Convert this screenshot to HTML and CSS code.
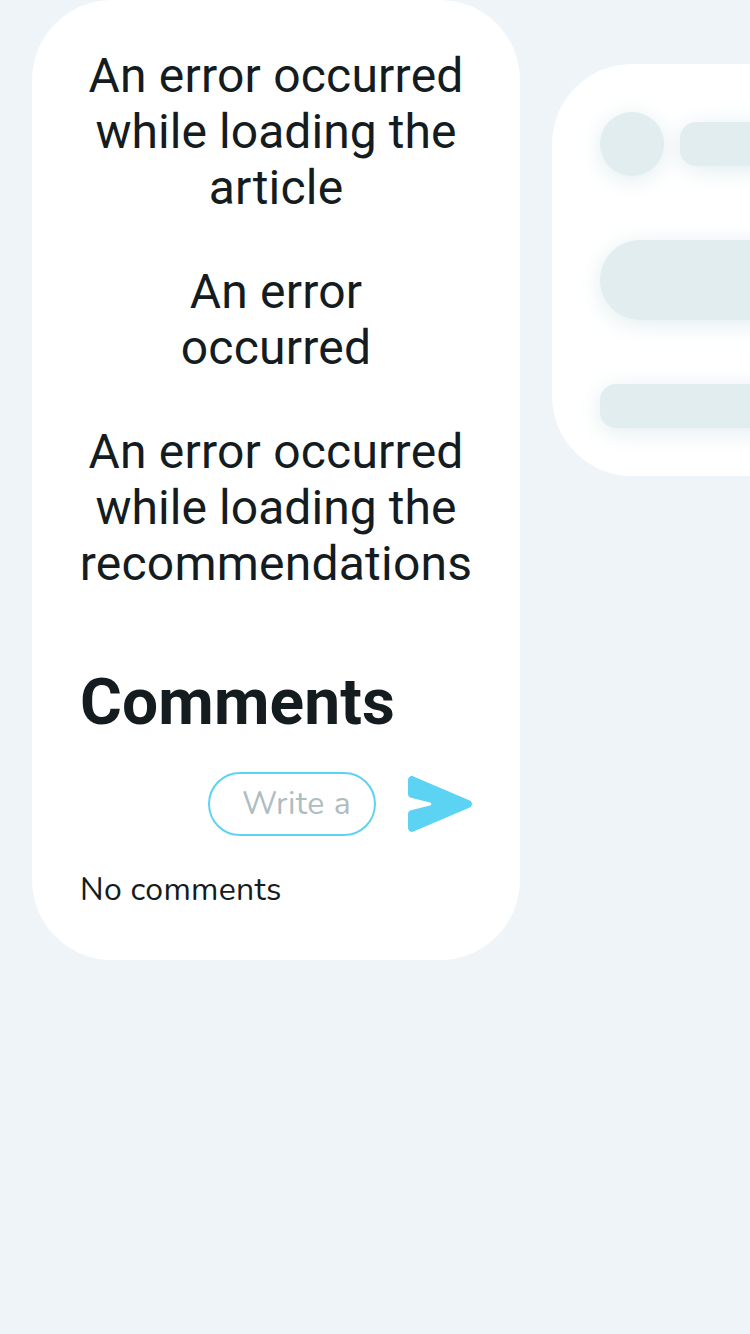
FILE: index.html
```html
<!DOCTYPE html>
<html lang="en">
<head>
<meta charset="utf-8">
<title>Article</title>
<link rel="stylesheet" href="styles.css">
</head>
<body>
<div class="page">
  <main class="card article">
    <p class="error">An error occurred <span class="snug">while loading the</span> article</p>
    <p class="error">An error<br>occurred</p>
    <p class="error">An error occurred <span class="snug">while loading the</span> recommendations</p>
    <h1 class="title">Comments</h1>
    <form class="form">
      <div class="field"><span class="placeholder">Write a</span></div>
      <svg class="send" viewBox="0 0 64 56" aria-hidden="true"><path d="M0 4.2C0 1.2 2.8-.8 5.5.4L61.8 24.5c2.9 1.3 2.9 5.7 0 7L5.5 55.6C2.8 56.8 0 54.8 0 51.8V38c0-1.8 1.2-3.3 2.9-3.8L22 29.6c1.7-.5 1.7-2.7 0-3.2L2.9 21.8C1.2 21.3 0 19.8 0 18Z"/></svg>
    </form>
    <p class="empty">No comments</p>
  </main>
  <aside class="card side">
    <div class="row"><div class="bone avatar"></div><div class="bone name"></div></div>
    <div class="bone heading"></div>
    <div class="bone line"></div>
  </aside>
</div>
</body>
</html>
```
FILE: styles.css
```css
body { margin: 0; background: #eef4f7; color: #141c1f; font-family: Roboto, sans-serif; }
.page { display: flex; align-items: flex-start; gap: 32px; width: 100%; height: 1334px; padding-left: 32px; box-sizing: border-box; overflow: hidden; }
.card { box-sizing: border-box; flex: none; width: 488px; padding: 48px; border-radius: 80px; background: #fff; }
.article { height: 960px; }
.error { margin: 0 -4px 48px; font-size: 48px; line-height: 56px; text-align: center; letter-spacing: 0.22px; }
.snug { letter-spacing: 0.06px; }
.title { margin: 73px 0 31px; font-size: 64px; line-height: 76px; font-weight: 700; letter-spacing: 0.15px; }
.form { display: flex; justify-content: flex-end; align-items: center; gap: 32px; margin: 0; }
.field { box-sizing: border-box; width: 168px; height: 64px; padding: 0 20px 0 32px; border: 2px solid #5dd3f3; border-radius: 32px; overflow: hidden; }
.placeholder { display: block; font: 32px/60px Nunito, "Open Sans", sans-serif; letter-spacing: 0.5px; color: #aebdc1; white-space: nowrap; }
.send { width: 64px; height: 56px; fill: #5dd3f3; }
.empty { margin: 32px 0 0; font: 32px/44px Nunito, "Open Sans", sans-serif; letter-spacing: 0.28px; }
.side { margin-top: 64px; height: 412px; }
.bone { background: #e2edef; box-shadow: 0 4px 24px #e2edf0; }
.row { display: flex; gap: 16px; align-items: center; }
.avatar { width: 64px; height: 64px; border-radius: 50%; }
.name { width: 312px; height: 44px; border-radius: 16px; }
.heading { height: 80px; margin-top: 64px; border-radius: 40px; }
.line { height: 44px; margin-top: 64px; border-radius: 16px; }
```
